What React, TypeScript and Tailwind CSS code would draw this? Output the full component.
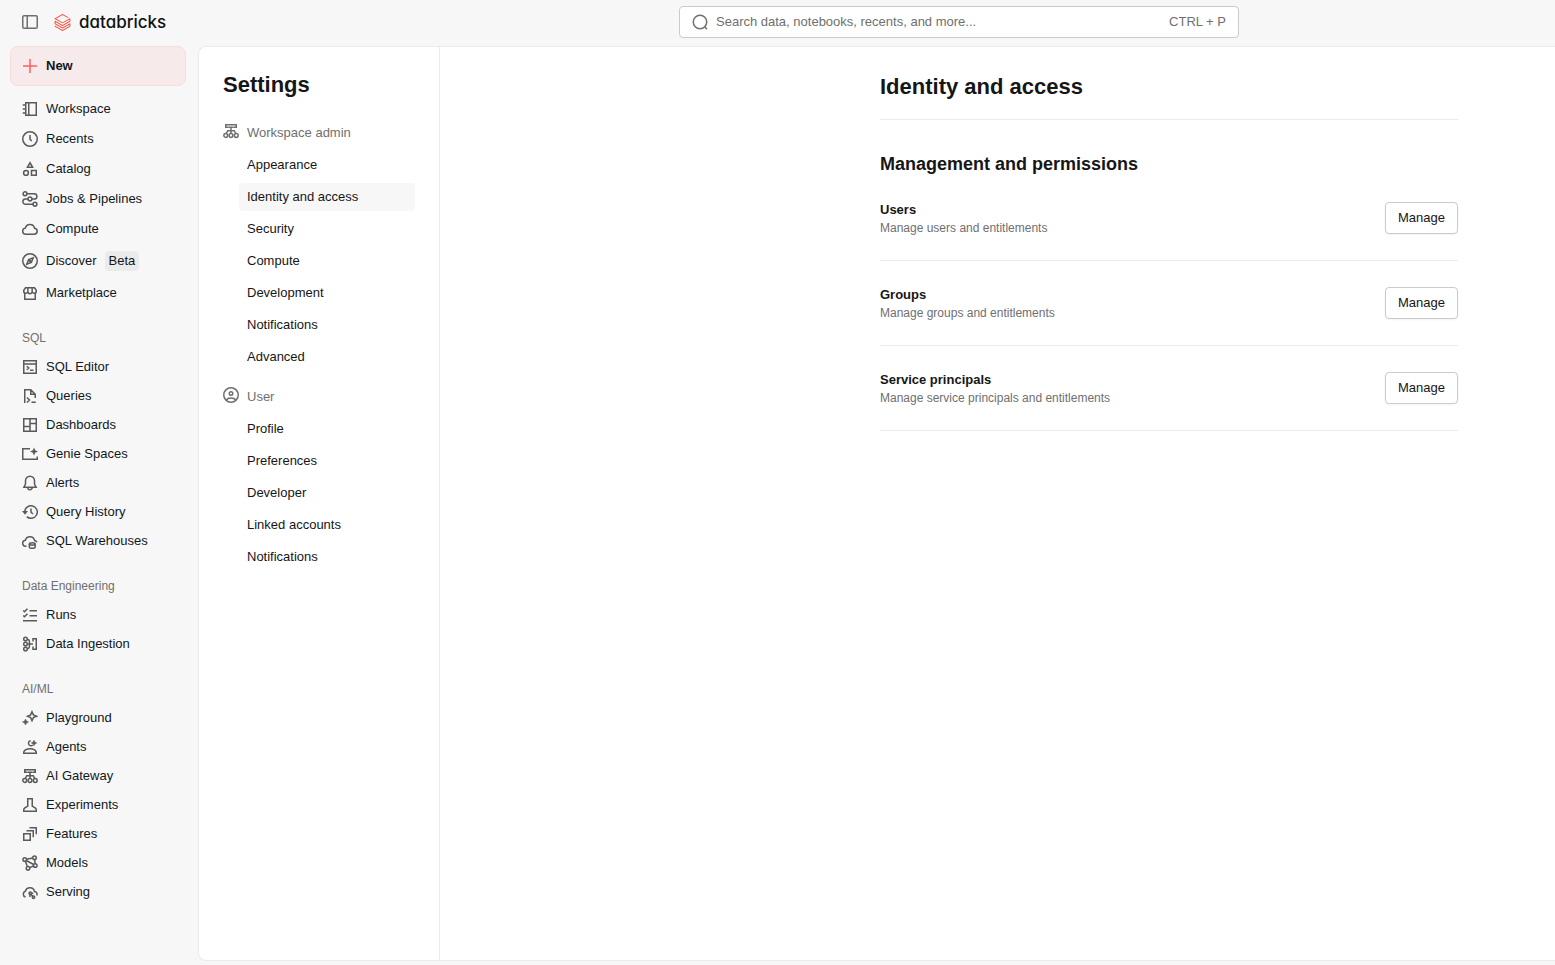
import React from "react";

type IconProps = { children: React.ReactNode; className?: string };

function Icon({ children, className = "size-4" }: IconProps) {
  return (
    <svg
      viewBox="0 0 16 16"
      fill="none"
      stroke="currentColor"
      strokeWidth="1.5"
      className={`shrink-0 ${className}`}
      aria-hidden="true"
    >
      {children}
    </svg>
  );
}

const icons: Record<string, React.ReactNode> = {
  workspace: <path d="M3.75 1.75h10.5v12.5H3.75zM6.75 2v12M.75 4h3M.75 8h3M.75 12h3" />,
  recents: (
    <>
      <circle cx="8" cy="8" r="7.25" />
      <path d="M8 4v4.25l1.75 1.75" />
    </>
  ),
  catalog: (
    <>
      <path d="M8 1.75 10.6 6.25H5.4z" />
      <circle cx="4" cy="11.9" r="2.4" />
      <path d="M9.5 9.5h4.75v4.75H9.5z" />
    </>
  ),
  jobs: (
    <>
      <circle cx="3" cy="2.75" r="1.9" />
      <circle cx="8" cy="8" r="1.9" />
      <circle cx="13" cy="13.25" r="1.9" />
      <path d="M5 2.75h7.25a2.6 2.6 0 0 1 0 5.25H10M6 8H3.5a2.6 2.6 0 0 0 0 5.25H11" />
    </>
  ),
  compute: (
    <path d="M3.75 13.25a3.1 3.1 0 0 1-.4-6.17 4.75 4.75 0 0 1 9.2.2 3 3 0 0 1-.3 5.97z" />
  ),
  discover: (
    <>
      <circle cx="8" cy="8" r="7.25" />
      <path d="M11.2 4.8 9.4 9.4 4.8 11.2l1.8-4.6z" />
      <circle cx="8" cy="8" r=".6" />
    </>
  ),
  marketplace: (
    <path d="M3.5 2.75h9l1.75 2.5V6a2 2 0 0 1-4.1.5 2.15 2.15 0 0 1-4.3 0A2 2 0 0 1 1.75 6v-.75zM2.75 8v6.25h10.5V8M5.85 3v3.5M10.15 3v3.5" />
  ),
  editor: <path d="M1.75 1.75h12.5v12.5H1.75zM2 5h12M4.75 7.25l2 1.75-2 1.75M8 11.25h3.5" />,
  queries: <path d="M2.75 15V1.75h6l4.5 4.5V10M8.75 2v4.25h4.5M5 9.5l2.5 2.5L5 14.5M9.5 14.25h4.25" />,
  dashboards: <path d="M1.75 1.75h12.5v12.5H1.75zM8 2v12M2 9.5h6M8 6.5h6" />,
  genie: (
    <>
      <path d="M8 2.75H.75v10.5h14.5V10.5" />
      <path
        d="m12 1.5 1.2 2.8L16 5.5l-2.8 1.2L12 9.5l-1.2-2.8L8 5.5l2.8-1.2z"
        fill="currentColor"
        stroke="none"
      />
    </>
  ),
  alerts: (
    <path d="M8 1.25a4.5 4.5 0 0 0-4.5 4.5V9l-1.6 3.25h12.2L12.5 9V5.75A4.5 4.5 0 0 0 8 1.25zM5.75 12.5a2.25 2.25 0 0 0 4.5 0" />
  ),
  history: (
    <>
      <path d="M2.75 8a6.25 6.25 0 1 1 2 4.6M9 4.5v3.75L11 10" />
      <path d="M0 7h6l-3 3.75z" fill="currentColor" stroke="none" />
    </>
  ),
  warehouses: (
    <>
      <path d="M4.5 13.25H4a3 3 0 0 1-.65-5.97 4.75 4.75 0 0 1 9.2.2A2.9 2.9 0 0 1 15 9.25" />
      <ellipse cx="10.25" cy="10.9" rx="2.9" ry="1.15" />
      <path d="M7.35 10.9V14c0 .7 1.3 1.25 2.9 1.25s2.9-.55 2.9-1.25v-3.1" />
    </>
  ),
  runs: <path d="M7.5 3.75H15M7.5 8.75H15M1 13.75h14M1.25 3.5 2.5 4.75l3-3M1.25 8.5 2.5 9.75l3-3" />,
  ingestion: (
    <>
      <circle cx="3.5" cy="3" r="1.8" />
      <circle cx="3.5" cy="8" r="1.8" />
      <circle cx="3.5" cy="13" r="1.8" />
      <path d="M5.25 3.25C7.5 3.5 7.5 5 7.5 8s0 4.5-2.25 4.75M5.5 8H11M11 5.5V2.75h3.25v10.5H11V10.5" />
    </>
  ),
  playground: (
    <>
      <path d="m10 1.75 1.4 3.1 3.1 1.4-3.1 1.4-1.4 3.1-1.4-3.1-3.1-1.4 3.1-1.4z" />
      <path
        d="m3.5 9 1 2 2 1-2 1-1 2-1-2-2-1 2-1z"
        fill="currentColor"
        strokeWidth=".5"
      />
    </>
  ),
  agents: (
    <>
      <path d="M1.75 14.25V13C2.5 11 5 9.75 8 9.75S13.5 11 14.25 13v1.25zM8.75 1.75a2.5 2.5 0 1 0 2 4.25" />
      <path
        d="m12 1.25.9 1.85 1.85.9-1.85.9L12 6.750l-.9-1.850L9.250 4l1.850-.9z"
        fill="currentColor"
        strokeWidth=".5"
      />
    </>
  ),
  gateway: (
    <>
      <path d="M5.25 4.25h-2.5v-2.5h10.500v2.500h-2.500M8 4.500v6M3.250 10.500l1.500-2.750h6.500l1.500 2.750M5.500 4.250h5" />
      <circle cx="2.75" cy="12.5" r="1.9" />
      <circle cx="8" cy="12.5" r="1.9" />
      <circle cx="13.25" cy="12.5" r="1.9" />
    </>
  ),
  experiments: (
    <path d="M5.75 1.75h4.5V9l3.200 2.200c.5.4.8.9.8 1.500v1.550H1.750V12.700c0-.6.3-1.100.8-1.500L5.750 9z" />
  ),
  features: <path d="M1.75 7.75h6.5v6.5h-6.5zM4.500 4.750h6.750v6.500M7.500 1.750h6.750v6.500" />,
  models: (
    <>
      <circle cx="2.75" cy="4.5" r="1.8" />
      <circle cx="12.5" cy="2.75" r="1.8" />
      <circle cx="13.25" cy="10.5" r="1.8" />
      <circle cx="6" cy="13.25" r="1.8" />
      <path d="M4.5 4.2l6.200-1.100M12.700 4.500l.4 4.200M11.500 11l-3.800 1.600M3.300 6.200l2.100 5.300M4.200 5.500l7.500 4" />
    </>
  ),
  serving: (
    <>
      <path d="M3.5 13a3 3 0 0 1-.15-5.72 4.75 4.75 0 0 1 9.2.2 2.9 2.9 0 0 1 2.25 4.02" />
      <circle cx="8.25" cy="9.25" r="1.2" />
      <circle cx="11.5" cy="13.25" r="1.2" />
      <path d="M9 10.3l1.7 2M9.500 9.250h1.750M8 10.500V13" />
    </>
  ),
  user: (
    <>
      <circle cx="8" cy="8" r="7.25" />
      <circle cx="8" cy="6.5" r="1.75" />
      <path d="M3.25 13c1-1.3 2.75-1.9 4.75-1.9s3.75.6 4.75 1.9" />
    </>
  ),
};

type Item = { label: string; icon: string; badge?: string };

const primary: Item[] = [
  { label: "Workspace", icon: "workspace" },
  { label: "Recents", icon: "recents" },
  { label: "Catalog", icon: "catalog" },
  { label: "Jobs & Pipelines", icon: "jobs" },
  { label: "Compute", icon: "compute" },
  { label: "Discover", icon: "discover", badge: "Beta" },
  { label: "Marketplace", icon: "marketplace" },
];

const groups: { title: string; items: Item[] }[] = [
  {
    title: "SQL",
    items: [
      { label: "SQL Editor", icon: "editor" },
      { label: "Queries", icon: "queries" },
      { label: "Dashboards", icon: "dashboards" },
      { label: "Genie Spaces", icon: "genie" },
      { label: "Alerts", icon: "alerts" },
      { label: "Query History", icon: "history" },
      { label: "SQL Warehouses", icon: "warehouses" },
    ],
  },
  {
    title: "Data Engineering",
    items: [
      { label: "Runs", icon: "runs" },
      { label: "Data Ingestion", icon: "ingestion" },
    ],
  },
  {
    title: "AI/ML",
    items: [
      { label: "Playground", icon: "playground" },
      { label: "Agents", icon: "agents" },
      { label: "AI Gateway", icon: "gateway" },
      { label: "Experiments", icon: "experiments" },
      { label: "Features", icon: "features" },
      { label: "Models", icon: "models" },
      { label: "Serving", icon: "serving" },
    ],
  },
];

const settings = [
  {
    title: "Workspace admin",
    icon: "gateway",
    items: ["Appearance", "Identity and access", "Security", "Compute", "Development", "Notifications", "Advanced"],
  },
  {
    title: "User",
    icon: "user",
    items: ["Profile", "Preferences", "Developer", "Linked accounts", "Notifications"],
  },
];

const permissions = [
  { title: "Users", text: "Manage users and entitlements" },
  { title: "Groups", text: "Manage groups and entitlements" },
  { title: "Service principals", text: "Manage service principals and entitlements" },
];

function NavLink({ item, size }: { item: Item; size: string }) {
  return (
    <li>
      <a href="#" className={`flex items-center gap-2 px-3 ${size}`}>
        <Icon className="size-4 text-[#5a5a5a]">{icons[item.icon]}</Icon>
        <span>{item.label}</span>
        {item.badge && <span className="rounded bg-[#ebebeb] px-1 leading-5">{item.badge}</span>}
      </a>
    </li>
  );
}

function Header() {
  return (
    <header className="flex h-[46px] items-start pr-[316px]">
      <div className="flex h-11 flex-1 items-center pl-[22px]">
        <button type="button" aria-label="Toggle sidebar" className="text-[#6f6f6f]">
          <Icon>
            <rect x=".75" y="1.75" width="14.5" height="12.5" rx="1.25" />
            <path d="M5.25 2v12" />
          </Icon>
        </button>
        <a href="#" className="ml-4 flex items-center gap-2">
          <svg viewBox="0 0 24 24" className="size-[17px] shrink-0 fill-[#ff3621]" aria-hidden="true">
            <path d="M.95 14.184L12 20.403l9.919-5.55v2.21L12 22.662l-10.484-5.96-.565.308v.77L12 24l11.05-6.218v-4.317l-.515-.309L12 19.118l-9.867-5.653v-2.21L12 16.805l11.05-6.218V6.32l-.515-.308L12 11.974 2.647 6.681 12 1.388l7.76 4.368.668-.411v-.566L12 0 .95 6.27v.72L12 13.207l9.919-5.55v2.26L12 15.52 1.516 9.56l-.565.308Z" />
          </svg>
          <span className="font-['Inter',sans-serif] text-[17px] leading-6 font-medium text-[#111] [font-feature-settings:'cv11']">
            databricks
          </span>
        </a>
      </div>
      <label className="mt-[6px] flex h-8 w-[560px] items-center gap-2 rounded border border-[#cbcbcb] bg-white px-3 text-[#6f6f6f]">
        <Icon>
          <circle cx="8" cy="8" r="6.75" />
          <path d="M12.5 12.5l2.5 2.7" />
        </Icon>
        <input
          type="text"
          aria-label="Search"
          placeholder="Search data, notebooks, recents, and more..."
          className="min-w-0 flex-1 bg-transparent outline-none placeholder:text-[#6f6f6f]"
        />
        <span>CTRL + P</span>
      </label>
    </header>
  );
}

function Sidebar() {
  return (
    <nav aria-label="Main" className="w-[198px] shrink-0 pr-3 pl-[10px] text-[#11171c]">
      <button
        type="button"
        className="mb-2 flex h-10 w-full items-center gap-2 rounded-lg border border-[#f9dcdc] bg-[#f7eaea] px-[11px] font-bold"
      >
        <Icon className="size-4 text-[#ff5f5f]">
          <path d="M8 1v14M1 8h14" />
        </Icon>
        New
      </button>
      <ul>
        {primary.map((item) => (
          <NavLink key={item.label} item={item} size={item.badge ? "h-[34px]" : "h-[30px]"} />
        ))}
      </ul>
      {groups.map((group) => (
        <section key={group.title} className="pb-px">
          <h2 className="h-11 px-3 pt-4 text-xs leading-[29px] text-[#6f6f6f]">{group.title}</h2>
          <ul>
            {group.items.map((item) => (
              <NavLink key={item.label} item={item} size="h-[29px]" />
            ))}
          </ul>
        </section>
      ))}
    </nav>
  );
}

function SettingsNav() {
  return (
    <nav aria-label="Settings" className="w-[241px] shrink-0 border-r border-[#ebebeb] px-6 pt-6">
      <h1 className="mb-[18px] text-[22px] leading-7 font-bold">Settings</h1>
      {settings.map((group) => (
        <section key={group.title} className="mb-2">
          <h2 className="flex h-8 items-center gap-2 text-[#6f6f6f]">
            <Icon className="mb-1 size-4">{icons[group.icon]}</Icon>
            {group.title}
          </h2>
          <ul className="pl-4">
            {group.items.map((label) => (
              <li key={label} className="py-[2px]">
                <a
                  href="#"
                  className={`block h-7 rounded px-2 leading-7 ${label === "Identity and access" ? "bg-[#f7f7f7]" : ""}`}
                >
                  {label}
                </a>
              </li>
            ))}
          </ul>
        </section>
      ))}
    </nav>
  );
}

export default function App() {
  return (
    <div className="flex min-h-screen flex-col bg-[#f7f7f7] font-['Liberation_Sans',Arial,sans-serif] text-[13px] leading-5 text-[#161616]">
      <Header />
      <div className="flex flex-1">
        <Sidebar />
        <div className="mb-1 flex flex-1 rounded-l-lg border-y border-l border-[#ebebeb] bg-white">
          <SettingsNav />
          <main className="flex-1 pt-6 pr-[97px] pl-[440px]">
            <h2 className="border-b border-[#ebebeb] pt-[2px] pb-[18px] text-[22px] leading-7 font-bold">
              Identity and access
            </h2>
            <h3 className="mt-8 text-lg leading-6 font-bold">Management and permissions</h3>
            {permissions.map((row) => (
              <div
                key={row.title}
                className="flex h-[85px] items-center justify-between border-b border-[#ebebeb]"
              >
                <div>
                  <h4 className="leading-5 font-bold">{row.title}</h4>
                  <p className="text-xs leading-4 text-[#6f6f6f]">{row.text}</p>
                </div>
                <button
                  type="button"
                  className="h-8 rounded border border-[#cbcbcb] bg-white px-3 shadow-xs"
                >
                  Manage
                </button>
              </div>
            ))}
          </main>
        </div>
      </div>
    </div>
  );
}
